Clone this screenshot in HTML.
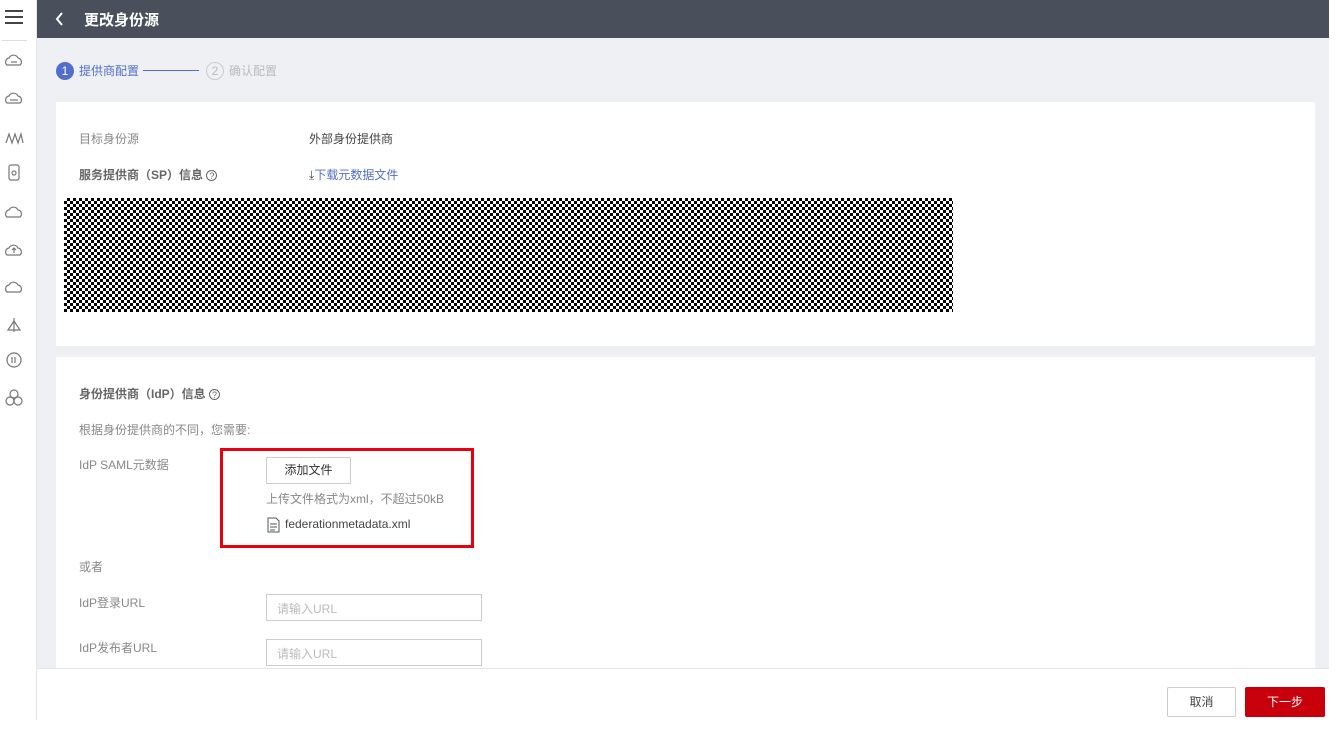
<!DOCTYPE html>
<html><head><meta charset="utf-8"><style>
*{margin:0;padding:0;box-sizing:border-box}
body{width:1339px;height:737px;background:#fff;position:relative;overflow:hidden;font-family:"Liberation Sans","Noto Sans CJK SC",sans-serif;font-size:12px;color:#666}
.a{position:absolute}
.side{left:0;top:0;width:37px;height:720px;background:#fff;border-right:1px solid #e4e6ea}
.hdr{left:37px;top:0;width:1292px;height:38px;background:#4a4f5c;color:#fff}
.main{left:37px;top:38px;width:1292px;height:630px;background:#eef0f4}
.card{background:#fff;left:56px;width:1259px}
.chk{left:64px;top:198px;width:889px;height:114px;background-color:#fff;background-image:linear-gradient(45deg,#000 25%,transparent 25%,transparent 75%,#000 75%),linear-gradient(45deg,#000 25%,transparent 25%,transparent 75%,#000 75%);background-size:6px 6px;background-position:0 0,3px 3px}
.lbl{color:#888;font-size:12px}
.b{font-weight:bold;color:#666}
.inp{border:1px solid #ccc;background:#fff;width:216px;height:27px;color:#bbb;padding:5px 10px;font-size:12px}
</style></head><body>
<div class="a side">
 <div class="a" style="left:5px;top:10px;width:18px;height:2px;background:#444;box-shadow:0 6px 0 #444,0 12px 0 #444"></div>
 <div class="a" style="left:2px;top:40px;width:25px;height:1px;background:#ddd"></div>
 <svg class="a" style="left:4px;top:52px" width="20" height="360" fill="none" stroke="#777" stroke-width="1.2">
  <path d="M3 13a4 4 0 0 1 2-7a5 5 0 0 1 9 0a4 4 0 0 1 2 7z"/><path d="M7 10h6"/>
  <path d="M3 51a4 4 0 0 1 2-7a5 5 0 0 1 9 0a4 4 0 0 1 2 7z"/><path d="M6 48h8"/>
  <path d="M2 91l3-9 3 9 3-9 3 9 3-9 2 9"/>
  <rect x="5" y="113" width="10" height="15" rx="2"/><circle cx="10" cy="121" r="2"/>
  <path d="M3 165a4 4 0 0 1 2-7a5 5 0 0 1 9 0a4 4 0 0 1 2 7z"/>
  <path d="M3 203a4 4 0 0 1 2-7a5 5 0 0 1 9 0a4 4 0 0 1 2 7z"/><path d="M10 201v-5M8 198l2-2 2 2"/>
  <path d="M3 240a4 4 0 0 1 2-7a5 5 0 0 1 9 0a4 4 0 0 1 2 7z"/>
  <path d="M10 266v14M4 278l6-9 6 9z"/>
  <circle cx="10" cy="308" r="7"/><path d="M8 305v6M11 305v6"/>
  <circle cx="10" cy="342" r="4"/><circle cx="6" cy="349" r="4"/><circle cx="14" cy="349" r="4"/>
 </svg>
</div>
<div class="a" style="left:37px;top:330px;width:11px;height:75px;background:#fff;border-radius:0 6px 6px 0"></div>
<div class="a" style="left:40px;top:362px;width:0;height:0;border-left:5px solid #444;border-top:4px solid transparent;border-bottom:4px solid transparent"></div>
<div class="a main"></div>
<div class="a hdr"><svg class="a" style="left:18px;top:12px" width="10" height="14" fill="none" stroke="#fff" stroke-width="2"><path d="M7 1L2 7l5 6"/></svg><span class="a" style="left:47px;top:9px;font-size:15px;font-weight:bold">更改身份源</span></div>
<div class="a" style="left:56px;top:62px;width:18px;height:18px;border-radius:50%;background:#526ecc;color:#fff;text-align:center;line-height:18px;font-size:12px">1</div>
<div class="a" style="left:79px;top:62px;color:#526ecc">提供商配置</div>
<div class="a" style="left:143px;top:70px;width:56px;height:1px;background:#526ecc"></div>
<div class="a" style="left:206px;top:62px;width:18px;height:18px;border-radius:50%;border:1px solid #ccc;color:#bbb;text-align:center;line-height:16px">2</div>
<div class="a" style="left:229px;top:62px;color:#bbb">确认配置</div>
<div class="a card" style="top:102px;height:244px"></div>
<div class="a lbl" style="left:79px;top:130px">目标身份源</div>
<div class="a" style="left:309px;top:130px;color:#444">外部身份提供商</div>
<div class="a b" style="left:79px;top:166px">服务提供商（SP）信息 <span style="font-weight:normal;border:1px solid #666;border-radius:50%;display:inline-block;width:11px;height:11px;font-size:9px;line-height:10px;text-align:center">?</span></div>
<div class="a" style="left:309px;top:166px;color:#526ecc"><span style="color:#444">⤓</span>下载元数据文件</div>
<div class="a chk"></div>
<div class="a card" style="top:357px;height:311px"></div>
<div class="a b" style="left:79px;top:385px">身份提供商（IdP）信息 <span style="font-weight:normal;border:1px solid #666;border-radius:50%;display:inline-block;width:11px;height:11px;font-size:9px;line-height:10px;text-align:center">?</span></div>
<div class="a lbl" style="left:79px;top:421px">根据身份提供商的不同，您需要:</div>
<div class="a lbl" style="left:79px;top:456px">IdP SAML元数据</div>
<div class="a" style="left:220px;top:448px;width:254px;height:100px;border:3px solid #e60012"></div>
<div class="a" style="left:266px;top:457px;width:85px;height:27px;border:1px solid #ccc;color:#333;text-align:center;line-height:25px">添加文件</div>
<div class="a lbl" style="left:266px;top:490px">上传文件格式为xml，不超过50kB</div>
<svg class="a" style="left:267px;top:517px" width="13" height="16" fill="none" stroke="#555"><path d="M1 1h8l3 3v11H1z M3 7h7M3 10h7M3 13h5"/></svg>
<div class="a" style="left:285px;top:517px;color:#444">federationmetadata.xml</div>
<div class="a lbl" style="left:79px;top:558px">或者</div>
<div class="a lbl" style="left:79px;top:594px">IdP登录URL</div>
<div class="a inp" style="left:266px;top:594px">请输入URL</div>
<div class="a lbl" style="left:79px;top:639px">IdP发布者URL</div>
<div class="a inp" style="left:266px;top:639px">请输入URL</div>
<div class="a" style="left:37px;top:668px;width:1292px;height:52px;background:#fff;border-top:1px solid #e4e6ea"></div>
<div class="a" style="left:1167px;top:687px;width:69px;height:30px;border:1px solid #ccc;border-radius:2px;text-align:center;line-height:28px;color:#444">取消</div>
<div class="a" style="left:1245px;top:687px;width:80px;height:30px;background:#c7000b;border-radius:2px;text-align:center;line-height:30px;color:#fff">下一步</div>
</body></html>
